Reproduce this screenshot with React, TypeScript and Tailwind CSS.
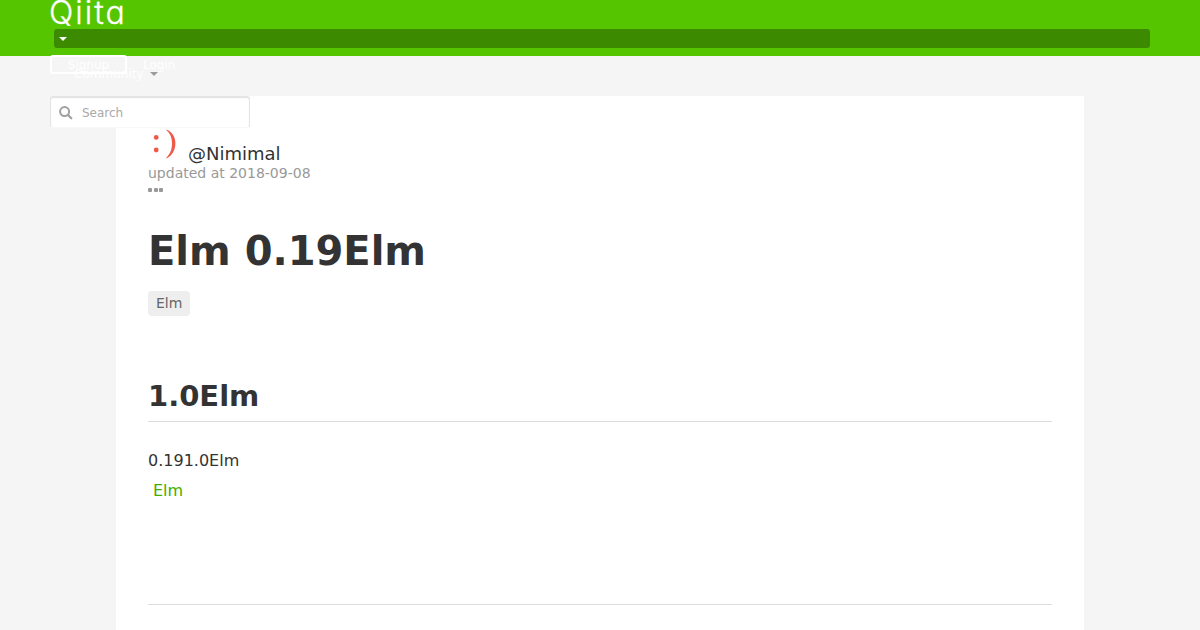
import type { ReactNode } from "react";

function Caret({ className }: { className: string }) {
  return (
    <svg aria-hidden="true" className={className} viewBox="0 0 8 4" width="8" height="4" fill="currentColor">
      <path d="M0 0h8L4 4z" />
    </svg>
  );
}

function SearchIcon() {
  return (
    <svg
      aria-hidden="true"
      className="shrink-0 text-[#a0a0a0]"
      width="14"
      height="14"
      viewBox="0 0 14 14"
      fill="none"
      stroke="currentColor"
      strokeWidth="2"
    >
      <circle cx="5.6" cy="5.6" r="4.5" />
      <path d="M9 9l3.3 3.3" strokeWidth="2.2" strokeLinecap="round" />
    </svg>
  );
}

function Avatar() {
  return (
    <svg aria-hidden="true" className="shrink-0 text-[#ee5a4a]" width="32" height="32" viewBox="0 0 32 32" fill="currentColor">
      <circle cx="8.2" cy="9.4" r="2.4" />
      <circle cx="8.2" cy="22" r="2.4" />
      <path d="M18.4 1.4C24.2 3.8 27.4 8.8 27.4 15.2S24.2 27.8 18.4 30.4l-.2-.7c3.6-3 5.8-7.8 5.8-14.1S21.8 5 18.2 2.1z" />
    </svg>
  );
}

function Header() {
  return (
    <header className="relative z-10 h-14 bg-[#55c500] px-[50px] text-xs text-white">
      <div className="flex h-[29px] items-start">
        <a
          href="#"
          className="-ml-px font-[Inter,sans-serif] text-[32px] leading-[25px] font-light tracking-[2px] [-webkit-text-stroke:0.3px_white] [font-feature-settings:'cv11']"
        >
          Qiita
        </a>
      </div>
      <div className="ml-1 flex h-[19px] items-center rounded-[3px] bg-[#3b8a00] pl-[5px]">
        <Caret className="text-white" />
      </div>
      <div className="relative mt-[7px] flex h-[19px] items-start">
        <a href="#" className="flex h-[19px] w-[77px] items-center justify-center rounded-[3px] border-2 border-white leading-4">
          Signup
        </a>
        <a href="#" className="ml-4 leading-5">
          Login
        </a>
        <div className="absolute top-[11px] left-6 flex items-center leading-4">
          Community
          <Caret className="ml-[7px] text-[#9b9b9b]" />
        </div>
      </div>
      <div className="mt-[22px] flex h-8 w-[200px] items-center rounded-[3px] border border-[#e4e4e4] border-b-[#f8f8f8] bg-white pt-px pl-2 shadow-[inset_0_1px_1px_rgba(0,0,0,0.12)]">
        <SearchIcon />
        <input
          aria-label="Search"
          placeholder="Search"
          className="ml-[9px] w-36 bg-transparent pt-px text-xs text-[#333333] outline-none placeholder:text-[#a9a9a9]"
        />
      </div>
    </header>
  );
}

function Tag({ children }: { children: ReactNode }) {
  return (
    <a href="#" className="flex h-[25px] w-fit items-center rounded bg-[#eeeeee] px-2 pb-0.5 text-sm text-[#666666]">
      {children}
    </a>
  );
}

export default function App() {
  return (
    <div className="h-[630px] overflow-hidden bg-[#f5f5f5] font-['DejaVu_Sans',sans-serif] text-[#333333]">
      <Header />
      <main className="mx-auto mt-10 h-[534px] w-[968px] bg-white px-8 pt-8">
        <div className="flex h-9">
          <Avatar />
          <a href="#" className="ml-2 pt-[15px] text-lg leading-[21px]">
            @Nimimal
          </a>
        </div>
        <p className="text-sm leading-[18px] text-[#999999]">updated at 2018-09-08</p>
        <div className="mt-[5px] flex h-1.5 items-center gap-[1.5px]">
          <span className="size-1 rounded-[1px] bg-[#999999]" />
          <span className="size-1 rounded-[1px] bg-[#999999]" />
          <span className="size-1 rounded-[1px] bg-[#999999]" />
        </div>
        <h1 className="mt-[34px] text-[40px] leading-[48px] font-bold">Elm 0.19Elm</h1>
        <div className="mt-4">
          <Tag>Elm</Tag>
        </div>
        <h2 className="mt-[62px] border-b border-[#dddddd] pb-1.5 text-[29px] leading-[37px] font-bold">1.0Elm</h2>
        <p className="mt-6 leading-[30px]">
          0.191.0Elm
          <br />
          <a href="#" className="ml-[5px] text-[#3fae00]">
            Elm
          </a>
        </p>
        <hr className="mt-[98px] border-[#dddddd]" />
      </main>
    </div>
  );
}
